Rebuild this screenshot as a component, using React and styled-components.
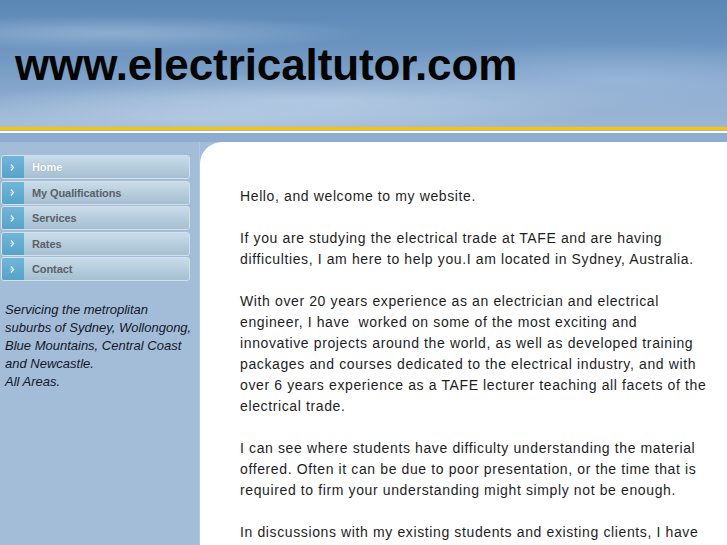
import React from "react";
import styled, { createGlobalStyle } from "styled-components";

const Global = createGlobalStyle`
  html, body { margin: 0; padding: 0; background: #a3bcd7; }
  body { font-family: "Liberation Sans", Arial, sans-serif; }
`;

const Page = styled.div`
  width: 727px;
  height: 545px;
  overflow: hidden;
  display: flex;
  flex-direction: column;
  background: #a3bcd7;
`;

const Header = styled.header`
  height: 127px;
  flex: none;
  display: flex;
  align-items: flex-start;
  padding: 40px 0 0 15px;
  box-sizing: border-box;
  background:
    radial-gradient(ellipse 260px 18px at 110px 33px, rgba(190,210,232,0.45), transparent),
    radial-gradient(ellipse 320px 28px at 320px 100px, rgba(200,218,238,0.55), transparent),
    radial-gradient(ellipse 300px 40px at 620px 80px, rgba(180,204,232,0.45), transparent),
    radial-gradient(ellipse 400px 30px at 200px 118px, rgba(196,214,234,0.5), transparent),
    linear-gradient(180deg, #5a87b5 0%, #6a93bf 35%, #85a6cb 70%, #9db7d6 100%);
`;

const Title = styled.h1`
  margin: 0;
  font-family: "Liberation Sans", Arial, sans-serif;
  font-weight: bold;
  font-size: 44px;
  line-height: 50px;
  letter-spacing: -0.1px;
  color: #050505;
`;

const YellowLine = styled.div`
  height: 3px;
  flex: none;
  background: #f6c400;
`;

const Gap = styled.div`
  height: 1px;
  flex: none;
  background: #9fb8d6;
`;

const WhiteLine = styled.div`
  height: 2px;
  flex: none;
  background: #ffffff;
`;

const Band = styled.div`
  height: 9px;
  flex: none;
  background: #8eabd0;
`;

const Body = styled.div`
  flex: 1;
  display: flex;
  min-height: 0;
`;

const Sidebar = styled.aside`
  width: 200px;
  flex: none;
  background: #a3bcd7;
  border-right: 1px solid #b3c8de;
  padding-top: 13px;
  box-sizing: border-box;
`;

const Nav = styled.nav`
  display: flex;
  flex-direction: column;
  gap: 1.5px;
  padding-left: 1px;
`;

const NavButton = styled.a`
  width: 189px;
  height: 24px;
  box-sizing: border-box;
  display: flex;
  align-items: center;
  border: 1px solid #d3e1ec;
  border-radius: 3px;
  overflow: hidden;
  background: linear-gradient(180deg, #cadce9 0%, #b7cddd 50%, #a6bfd1 100%);
  text-decoration: none;
  cursor: pointer;
`;

const NavIcon = styled.span`
  width: 22px;
  height: 100%;
  flex: none;
  display: flex;
  align-items: center;
  justify-content: center;
  background: linear-gradient(180deg, #72b6d6 0%, #56a3c9 100%);
`;

const NavLabel = styled.span`
  margin-left: 8px;
  font-family: "Liberation Sans", Arial, sans-serif;
  font-size: 11px;
  font-weight: bold;
  letter-spacing: -0.1px;
  color: ${(p) => (p.$active ? "#ffffff" : "#5b6168")};
  text-shadow: ${(p) => (p.$active ? "0 0 1px rgba(90,110,130,0.6)" : "none")};
`;

const SideNote = styled.p`
  margin: 20px 3px 0 5px;
  font-family: "Liberation Sans", Arial, sans-serif;
  font-style: italic;
  font-size: 13px;
  line-height: 18px;
  letter-spacing: 0;
  color: #14182a;
`;

const Main = styled.main`
  flex: 1;
  background: #ffffff;
  border-top-left-radius: 22px;
  padding: 44px 0 0 40px;
  box-sizing: border-box;
`;

const Para = styled.p`
  margin: 0 0 21px 0;
  width: 469px;
  font-family: "Liberation Sans", Arial, sans-serif;
  font-size: 14px;
  line-height: 21px;
  letter-spacing: 0.62px;
  color: #1e1e1e;
  white-space: pre-wrap;
`;

const Arrow = () => (
  <svg width="8" height="9" viewBox="0 0 8 9">
    <path d="M2 1.5 L4.5 4.5 L2 7.5" stroke="#e8f4fa" strokeWidth="1.2" fill="none" />
    <circle cx="2" cy="4.5" r="0.6" fill="#e8f4fa" />
  </svg>
);

const items = ["Home", "My Qualifications", "Services", "Rates", "Contact"];

export default function App() {
  return (
    <Page>
      <Global />
      <Header>
        <Title>www.electricaltutor.com</Title>
      </Header>
      <YellowLine />
      <Gap />
      <WhiteLine />
      <Band />
      <Body>
        <Sidebar>
          <Nav>
            {items.map((t, i) => (
              <NavButton key={t}>
                <NavIcon>
                  <Arrow />
                </NavIcon>
                <NavLabel $active={i === 0}>{t}</NavLabel>
              </NavButton>
            ))}
          </Nav>
          <SideNote>
            Servicing the metroplitan suburbs of Sydney, Wollongong, Blue Mountains, Central Coast and Newcastle.
            <br />
            All Areas.
          </SideNote>
        </Sidebar>
        <Main>
          <Para>Hello, and welcome to my website.</Para>
          <Para>
            If you are studying the electrical trade at TAFE and are having difficulties, I am here to help you.I am located in Sydney, Australia.
          </Para>
          <Para>
            With over 20 years experience as an electrician and electrical engineer, I have  worked on some of the most exciting and innovative projects around the world, as well as developed training packages and courses dedicated to the electrical industry, and with over 6 years experience as a TAFE lecturer teaching all facets of the electrical trade.
          </Para>
          <Para>
            I can see where students have difficulty understanding the material offered. Often it can be due to poor presentation, or the time that is required to firm your understanding might simply not be enough.
          </Para>
          <Para>
            In discussions with my existing students and existing clients, I have found that they are not getting the help they need.
          </Para>
        </Main>
      </Body>
    </Page>
  );
}
